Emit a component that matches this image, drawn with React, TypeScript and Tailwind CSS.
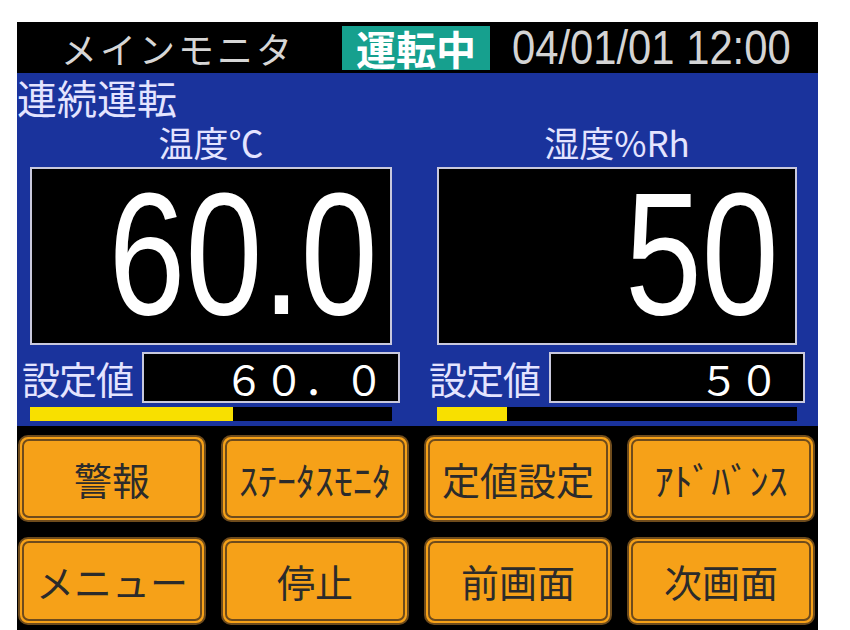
import React from "react";

const JP = "'Noto Sans CJK JP', 'Noto Sans', sans-serif";
const SANS = "'Liberation Sans', Arial, sans-serif";

function Btn({ label }: { label: string }) {
  return (
    <div className="rounded-[10px] border-[2px] border-[#6e4b1c] bg-[#f6a118] p-[2px]">
      <div
        className="flex h-full items-center justify-center rounded-[7px] border-[2px] border-[#6e4b1c] text-[38px] leading-none text-[#2b2b2b]"
        style={{ fontFamily: JP }}
      >
        {label}
      </div>
    </div>
  );
}

function Channel({
  title,
  value,
  sp,
  pct,
  spPad,
  valPad,
}: {
  title: string;
  value: string;
  sp: string;
  pct: number;
  spPad: string;
  valPad: string;
}) {
  return (
    <div className="flex flex-col">
      <div
        className="flex h-[49px] items-center justify-center pb-[2px] text-[35px] leading-[36px] text-[#e4e4ff]"
        style={{ fontFamily: JP }}
      >
        {title}
      </div>
      <div
        className={`flex h-[178px] items-center justify-end border-[2px] border-[#c9c9dd] bg-black ${valPad}`}
      >
        <span
          className="-mt-[4px] inline-block origin-right scale-x-[0.79] whitespace-nowrap text-[175px] leading-[166px] text-white"
          style={{ fontFamily: SANS }}
        >
          {value}
        </span>
      </div>
      <div className="-mx-[8px] mt-[7px] flex h-[51px] items-center">
        <span
          className="w-[120px] text-[38px] leading-[44px] tracking-[-1px] text-[#e4e4ff]"
          style={{ fontFamily: JP }}
        >
          設定値
        </span>
        <div
          className={`flex h-full flex-1 items-center justify-end border-[2px] border-[#c9c9dd] bg-black ${spPad}`}
        >
          <span className="text-[40px] leading-[44px] text-white" style={{ fontFamily: JP }}>
            {sp}
          </span>
        </div>
      </div>
      <div className="mt-[4px] h-[14px] bg-black">
        <div className="h-full bg-[#f8e000]" style={{ width: `${pct}%` }} />
      </div>
    </div>
  );
}

export default function App() {
  return (
    <div className="h-[630px] w-[850px] overflow-hidden bg-white pl-[17px] pt-[22px]">
      <div className="flex h-[608px] w-[801px] flex-col bg-black">
        {/* header */}
        <div className="flex h-[51px] items-center">
          <span
            className="ml-[44px] w-[281px] whitespace-nowrap text-[36px] leading-[44px] tracking-[3px] text-[#d6d6d6]"
            style={{ fontFamily: JP }}
          >
            メインモニタ
          </span>
          <div
            className="flex h-[44px] w-[148px] items-center justify-center bg-[#16a08e] text-[40px] font-bold leading-[44px] text-white"
            style={{ fontFamily: JP }}
          >
            運転中
          </div>
          <div className="ml-[22px] w-[280px] overflow-visible whitespace-nowrap">
            <span
              className="inline-block origin-left scale-x-[0.87] text-[48px] leading-[48px] text-[#d4d4d4]"
              style={{ fontFamily: SANS }}
            >
              04/01/01 12:00
            </span>
          </div>
        </div>
        {/* blue monitor area */}
        <div className="flex h-[353px] flex-col bg-[#1a339c] pt-[3px]">
          <div
            className="h-[42px] whitespace-nowrap text-[40px] leading-[42px] tracking-[0px] text-[#e4e4ff]"
            style={{ fontFamily: JP }}
          >
            連続運転
          </div>
          <div className="grid grid-cols-[362px_360px] gap-x-[45px] pl-[13px]">
            <Channel
              title="温度℃"
              value="60.0"
              sp="６０．０"
              pct={56}
              spPad="pr-[14px]"
              valPad="pr-[12px]"
            />
            <Channel
              title="湿度%Rh"
              value="50"
              sp="５０"
              pct={19.5}
              spPad="pr-[24px]"
              valPad="pr-[16px]"
            />
          </div>
        </div>
        {/* buttons */}
        <div className="grid flex-1 grid-cols-4 grid-rows-[87px_88px] gap-x-[15px] gap-y-[15px] pl-[1px] pr-[3px] pt-[9px]">
          <Btn label="警報" />
          <Btn label="ｽﾃｰﾀｽﾓﾆﾀ" />
          <Btn label="定値設定" />
          <Btn label="ｱﾄﾞﾊﾞﾝｽ" />
          <Btn label="メニュー" />
          <Btn label="停止" />
          <Btn label="前画面" />
          <Btn label="次画面" />
        </div>
      </div>
    </div>
  );
}
